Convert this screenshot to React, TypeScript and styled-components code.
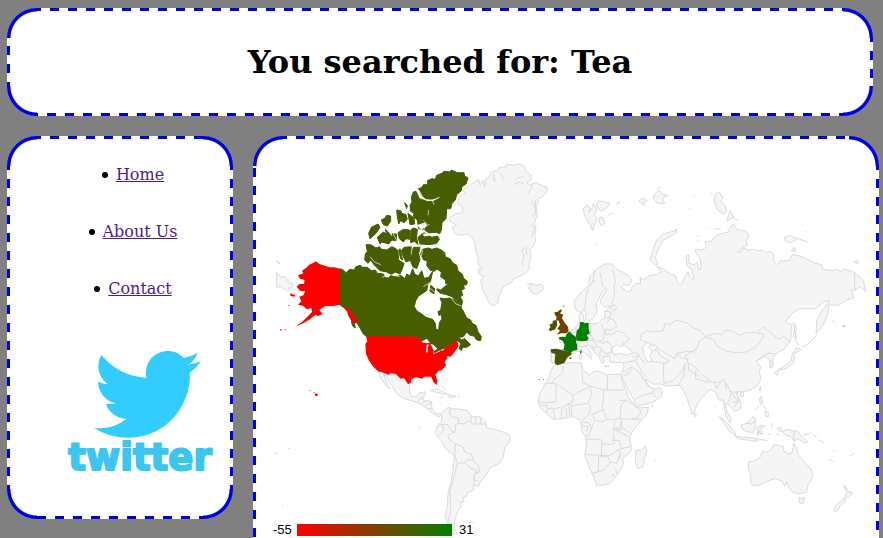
import React from "react";
import styled, { createGlobalStyle, css } from "styled-components";

const GlobalStyle = createGlobalStyle`
  html { background: #808080; scrollbar-width: none; }
  body { margin: 0; font-family: "DejaVu Serif", serif; font-size: 16px; color: #000; }
`;

const blue = "#0000e6";
const dashes = `transparent 0 7px, ${blue} 7px 16px, transparent 16px 18px`;
const corner = (at: string) =>
  `radial-gradient(circle 30px at ${at}, transparent 26px, ${blue} 27px, ${blue} 30px, transparent 31px)`;

/* Dashed frame with solid rounded corners. */
const dashedFrame = css`
  box-sizing: border-box;
  border-radius: 30px;
  background:
    ${corner("100% 100%")} left top / 30px 30px no-repeat,
    ${corner("0 100%")} right top / 30px 30px no-repeat,
    ${corner("0 0")} right bottom / 30px 30px no-repeat,
    ${corner("100% 0")} left bottom / 30px 30px no-repeat,
    repeating-linear-gradient(to right, ${dashes}) left top / 100% 3px no-repeat,
    repeating-linear-gradient(to bottom, ${dashes}) right top / 3px 100% no-repeat,
    repeating-linear-gradient(to left, ${dashes}) left bottom / 100% 3px no-repeat,
    repeating-linear-gradient(to top, ${dashes}) left top / 3px 100% no-repeat,
    #fff;
`;

const Page = styled.div`
  padding: 8px 4px 20px 7px;
`;

const Header = styled.header`
  ${dashedFrame}
  margin: 0 6px 20px 0;
  padding: 35px 10px;
  text-align: center;
`;

const Title = styled.h1`
  margin: 0;
  font-size: 32px;
  line-height: 38px;
`;

const Columns = styled.div`
  display: flex;
  align-items: flex-start;
  gap: 20px;
`;

const Sidebar = styled.aside`
  ${dashedFrame}
  flex: none;
  width: 226px;
  padding: 29px 3px 37px;
`;

const NavList = styled.ul`
  display: flex;
  flex-direction: column;
  align-items: center;
  gap: 38px;
  margin: 0 0 53px;
  padding: 0 0 0 40px;
  list-style: none;
`;

const NavItem = styled.li`
  display: flex;
  align-items: center;
  gap: 8px;
  padding-right: 14px;
  line-height: 19px;

  &::before {
    content: "";
    width: 6px;
    height: 6px;
    border-radius: 50%;
    background: #000;
  }
`;

const NavLink = styled.a`
  color: #551a8b;
`;

const LogoLink = styled.a`
  display: block;
  width: 156px;
  margin-left: 52px;
`;

const Drawing = styled.svg`
  display: block;
  width: 100%;
  height: auto;
`;

const Main = styled.main`
  ${dashedFrame}
  flex: 1;
  min-width: 0;
  padding: 14px 9px 30px 17px;
`;

const LegendLabel = styled.text`
  font: 13px "Liberation Sans", Arial, sans-serif;
  fill: #000;
`;

const Wordmark = styled.text`
  font: bold 37px "DejaVu Sans", sans-serif;
  fill: #3ac6f0;
  stroke: #3ac6f0;
  stroke-width: 2px;
  stroke-linejoin: round;
`;

const Land = styled.g`
  fill: #f5f5f5;
  stroke: #dadada;
  stroke-width: 3px;
  stroke-linejoin: round;
`;

const Borders = styled.path`
  fill: none;
`;

function TwitterLogo() {
  return (
    <Drawing viewBox="62 350 156 131" role="img" aria-label="twitter">
      <g transform="translate(94 340) scale(4.45)" fill="#33ccff">
        <path d="M23.953 4.57a10 10 0 01-2.825.775 4.958 4.958 0 002.163-2.723c-.951.555-2.005.959-3.127 1.184a4.92 4.92 0 00-8.384 4.482C7.69 8.095 4.067 6.13 1.64 3.162a4.822 4.822 0 00-.666 2.475c0 1.71.87 3.213 2.188 4.096a4.904 4.904 0 01-2.228-.616v.06a4.923 4.923 0 003.946 4.827 4.996 4.996 0 01-2.212.085 4.936 4.936 0 004.604 3.417 9.867 9.867 0 01-6.102 2.105c-.39 0-.779-.023-1.17-.067a13.995 13.995 0 007.557 2.209c9.053 0 13.998-7.496 13.998-13.985 0-.21 0-.42-.015-.63A9.935 9.935 0 0024 4.59z" />
      </g>
      <Wordmark x="140" y="469" textAnchor="middle">twitter</Wordmark>
    </Drawing>
  );
}

function Greenland() {
  return (
    <Land transform="translate(1290 450)">
      <path d="M178 82L184 66 202 62 208 52 228 50 230 42 248 46 268 42 282 48 290 66 304 76 302 92 290 98 300 106 318 98 330 104 352 112 350 124 336 142 322 146 326 158 318 170 322 196 312 220 318 236 314 262 318 270 308 290 300 298 304 322 296 344 300 356 284 372 262 382 250 386 244 398 230 404 216 416 212 430 206 438 204 458 194 468 178 460 164 430 156 410 152 390 162 380 148 374 144 362 152 350 142 338 146 326 138 306 136 284 128 264 112 252 92 256 76 252 66 232 80 226 62 216 58 204 76 192 96 188 98 172 82 160 88 142 106 128 98 122 122 104 138 94 146 88 150 106 158 92 164 110 166 88Z" />
      <Borders d="M252 104L268 96 282 102M280 80L262 84 256 90M304 152L316 176M306 196L314 200M304 224L314 236 304 262M276 348L282 316 274 300 288 292 290 314M148 366L160 352M294 130L306 112 306 98M184 82L196 96 190 72M210 70L222 90M316 152L316 196" />
      <path d="M292 404L306 402 302 410 294 414 304 418 302 426 318 434 338 420 342 412 334 402 320 406 308 400Z" />
      <path d="M460 174L474 166 480 176 476 188 488 172 490 160 500 180 494 194 502 204 494 222 488 242 480 224 470 208 462 192ZM500 160L508 152 524 156 540 160 530 174 514 184 504 176ZM508 202L518 202 524 220 514 228 508 216Z" />
      <Borders d="M560 162L570 156M540 194L550 190M528 244L532 245M500 282L502 288M366 340L368 341M534 196L538 194" />
    </Land>
  );
}

function Eurasia() {
  return (
    <Land transform="translate(1800 510)">
      <path d="M-76 390L-78 400-72 420-56 430-48 416-42 428-44 446-32 454-20 444-8 424-12 400-4 386 6 366 16 352 20 358 8 378 0 396 14 412 44 404 30 412 14 424 14 446 6 448 -6 460 -30 462-46 458-52 430-62 432-62 456-76 476-92 492-122 508-120 516-106 520-106 538-148 538-146 578-132 584-106 576-92 556-74 546-58 542-44 550-26 566-24 562-30 546-42 530-36 526-18 544-2 562 6 580 14 576 8 560 28 560 30 576 70 578 72 590 66 610 68 628 86 662 102 690 110 710 160 696 184 680 188 662 178 652 168 658 150 652 134 628 142 630 160 642 182 642 200 648 240 646 252 664 262 688 276 732 282 730 292 700 318 670 330 658 346 666 356 690 370 690 378 740 390 758 394 746 382 728 376 700 386 704 404 724 420 718 424 700 412 676 412 664 430 666 450 660 472 648 484 626 478 610 482 590 468 572 480 568 494 560 508 566 510 592 518 590 520 562 530 550 555 535 572 510 574 480 576 465 556 456 576 430 600 416 646 416 670 396 690 392 668 420 650 450 648 490 670 465 684 430 686 404 716 406 740 390 762 384 754 362 764 360 780 352 797 364 790 330 764 308 730 296 722 306 710 296 704 302 668 298 664 284 640 278 612 262 582 254 576 256 568 272 540 272 530 284 522 276 520 250 510 244 496 248 486 240 470 242 460 238 444 240 430 234 424 246 412 246 424 236 442 226 438 214 446 202 440 184 412 178 400 162 388 176 386 186 360 192 344 200 334 212 316 216 318 232 306 240 286 238 288 250 300 264 304 296 296 298 292 276 284 284 268 280 266 254 258 258 262 288 276 300 282 330 270 322 264 306 254 320 246 344 232 340 226 318 212 312 192 298 170 288 184 304 170 314 150 316 130 330 120 322 122 340 108 340 96 350 94 362 80 364 64 352 70 344 88 346 96 330 84 316 70 308 48 296 36 282 14 282-10 298-30 320-34 346-56 366Z" />
      <path fill="#fff" d="M36 542L38 532 50 524 62 530 74 526 90 538 98 548 82 556 60 550 42 554ZM128 530L140 518 152 520 146 534 156 544 150 556 156 574 144 576 132 556Z" />
      <path d="M220 184L230 178 228 190 206 202 188 212 176 236 166 262 174 282 166 286 150 270 158 244 170 210 190 192ZM116 92L132 84 142 92 126 102ZM164 72L176 60 190 74 204 76 188 84 194 100 172 100 160 84ZM346 72L358 66 368 84 362 96 376 106 380 124 370 134 352 118 342 92ZM380 152L390 122 402 142ZM552 202L568 196 592 206 574 218 556 214ZM574 242L582 232 588 244ZM762 278L770 270 776 280Z" />
      <Borders d="M50 100L60 96M280 78L284 80M266 114L272 118M326 174L330 172M344 176L362 178M290 198L296 200M172 56L182 50M594 206L606 210 624 216M614 184L618 185M126 106L138 102M332 70L338 74M292 210L298 212M402 146L416 150M764 308L764 358M578 456L584 470 580 500 590 502 582 480M696 452L706 458M38 300L46 330 42 350 44 380 34 402M-30 346L-20 332-16 300M-46 414L-42 380-34 352-16 330M8 350L4 326 0 308M42 404L50 412 42 424 30 412M14 424L34 426 28 444 16 442M20 460L30 444 46 454 50 470 34 480 16 478M-30 462-28 490-22 508-4 514 10 510 14 486 4 462M16 478L18 494 38 492 54 482 74 490 88 508 66 524M124 494L140 482 160 486 190 482 194 462 214 462 228 450 264 460 276 472 302 482 316 500 344 490 366 494 376 480 400 484 416 496 440 488 470 488 490 470 504 484 522 496 536 508 550 500 572 516M124 494L122 510 140 518M316 500L342 510 352 528 376 542 404 548 440 546 466 530 480 518 494 494 470 488M316 500L296 516 292 534 256 558 264 578 290 594 304 612 334 636 362 636 372 626 380 660M152 524L166 526 196 550 224 566 230 550 262 544 286 546M156 544L170 536 180 556 208 574 194 580 154 574M230 550L244 564 266 568M190 606L192 640 220 632 246 604 256 580M192 576L190 606M256 580L252 616 236 646M288 600L286 626 328 638M264 578L266 600 300 620M344 636L350 656 360 640 368 628M384 700L394 670 378 638M388 664L410 668 416 690 404 710M396 668L412 694M398 696L418 696M474 570L490 556 506 550 526 552M-26 510L-16 516-8 530-22 534-18 544M-4 514L8 520 20 514 36 526 34 548 14 550 6 536-6 530M6 536L-2 552 6 560M14 550L28 556M20 514L26 520M100 548L116 552 122 566 136 580M98 560L116 560M108 574L126 606 140 620M70 580L90 574 108 572 116 552M74 606L94 590 120 610 148 652M72 616L86 612 96 590M104 688L128 676 158 668 170 684M158 668L164 656M-66 528L-50 530-34 524-16 530" />
    </Land>
  );
}

function Oceania() {
  return (
    <Land transform="translate(1950 960)">
      <path d="M296 426L312 424 330 412 338 394 352 396 362 390 372 374 386 376 402 380 400 392 416 402 426 398 432 370 440 384 444 404 456 418 468 432 484 448 488 466 482 482 474 494 470 516 448 522 428 516 418 506 410 484 404 500 396 484 376 476 350 484 332 494 310 498 302 490 302 466 294 442ZM446 532L456 536 464 532 460 550 450 550Z" />
      <path d="M580 496L590 504 594 514 608 518 596 532 588 534 586 524 590 516ZM584 532L586 544 572 556 560 574 550 572 560 552 574 544Z" />
      <path d="M208 290L222 300 240 320 254 334 258 348 240 336 224 314ZM256 348L280 352 310 354 328 358 322 364 290 360 262 356ZM274 314L290 310 308 290 318 298 314 310 318 320 308 338 288 334 274 324ZM322 324L334 316 346 318 332 324 338 344 330 340 328 330 324 346ZM398 334L412 328 428 332 444 334 452 346 474 366 460 368 444 356 432 364 424 350 404 344ZM382 324L392 322 398 336 386 332ZM328 238L334 228 338 250 332 254ZM344 274L354 276 356 290 346 288ZM332 200L330 214 328 204ZM270 218L282 214 280 228 272 230ZM134 280L140 288 134 290ZM376 158L384 150 404 138 422 124 428 98 434 104 430 130 412 144 386 150 382 166 374 160ZM430 96L440 84 454 88 438 100Z" />
      <Borders d="M432 332L432 364M460 344L478 342 484 334M330 358L352 362M366 310L364 322M380 342L388 344M490 346L500 352M506 360L524 368M548 390L556 398M536 416L550 426M600 408L614 400M12 422L16 422M434 10L438 24 436 60 446 76M456 82L474 72 500 46M312 272L328 258M290 310L304 312 316 304M354 344L362 340M194 256L196 262M4 258L10 259M548 600L550 602M358 142L368 140 362 120M338 256L350 270M470 346L462 344" />
    </Land>
  );
}

function Americas() {
  return (
    <>
      <Land transform="translate(810 990)">
        <path d="M324 124L334 126 356 134 378 132 392 146 402 146 414 162 420 164 418 186 424 200 440 200 448 188 468 186 462 200 454 206 464 212 484 214 486 236 500 252 512 250 508 262 488 250 470 234 446 220 424 212 396 204 380 190 366 166 350 144 340 132 346 150 360 176 352 172 334 148Z" />
        <path d="M480 182L498 176 520 186 532 194 512 190ZM534 194L558 198 548 204 534 200Z" />
        <Borders d="M444 216L450 204 460 206M454 220L466 214M466 228L484 216M472 236L488 236M512 202L520 202M562 200L570 200M504 162L510 170M516 168L526 180M446 288L450 296M12 370L22 371M54 355L60 356M36 524L40 525M106 166L108 167" />
      </Land>
      <Land transform="translate(1260 1140)">
        <path d="M66 98L84 82 96 88 100 86 140 90 154 108 184 112 198 128 200 144 240 152 268 164 272 180 254 204 250 232 236 252 212 262 200 282 182 304 176 318 160 316 162 330 142 338 138 350 128 352 132 364 120 368 124 380 112 396 104 420 104 446 112 462 96 460 82 430 76 410 82 380 84 340 94 300 102 250 102 226 80 210 62 180 46 160 50 140 64 124Z" />
        <Borders d="M92 82L88 96 94 110 114 114 116 130 106 134 106 156 94 154 84 134 66 132 50 142M66 132L72 150 58 166M106 156L84 166 88 180 106 192 104 224 112 250 100 300 90 330 92 390 86 420 100 450M106 192L128 200 134 216 154 222 160 240 176 258 178 276 164 280 162 316M112 250L134 248 140 240 160 240M134 248L150 264 170 272 164 282 160 300 178 304M154 108L152 126 160 132 198 132M166 112L168 130M182 114L182 130M116 130L134 132 142 122 152 126M144 428L160 428" />
      </Land>
    </>
  );
}

function Africa() {
  return (
    <Land transform="translate(1560 1110)">
      <path d="M100 -10L112 -18 150 -22 184 -22 186 -4 208 16 222 4 238 4 262 14 300 12 310 40 324 80 338 98 350 114 386 112 382 130 360 156 340 180 328 204 334 230 332 246 308 264 310 284 294 312 268 342 230 347 222 322 212 300 194 256 200 224 196 200 184 180 182 152 160 140 126 146 100 148 78 130 60 112 54 98 60 70 76 40 88 20 92 4ZM348 242L364 240 376 228 380 244 368 290 354 296 346 280Z" />
      <Borders d="M78 40L98 40 102 28 128 8 130 -12M98 40L108 42 108 96 80 98 56 96M108 42L160 76 210 48 188 36 186 4M210 48L252 60 262 60 262 14M262 60L312 60M252 60L250 90 246 116 256 122M160 76L158 96 138 104 126 112 124 144M210 48L216 72 204 100 160 106 142 104M204 100L212 108 208 132 188 150M212 134L248 120 262 150 300 146 304 104 318 90M218 136L224 152 250 154 262 148M186 156L206 158 214 176 222 156M186 168L204 170 200 186M214 176L206 198 196 198M284 152L280 190 284 220 274 224 246 222 242 208 200 208M246 222L244 256 196 254M300 146L334 148 364 148M304 152L306 172 330 190M280 178L306 178M304 146L302 172 286 174M284 178L326 200M274 210L300 212 302 236 332 230M244 256L266 258 298 238 302 256 296 270M236 256L234 306 214 310M238 262L262 258 272 276 290 280 298 256M234 306L252 300 272 276M270 322L278 314 282 320M286 300L292 304 290 310M62 106L80 106 84 116 78 128M84 116L100 114 104 146M100 118L120 112M138 112L140 140M146 110L150 138M154 108L156 138M318 92L340 104 364 124 352 144 334 148M404 272L408 270M414 270L416 272M394 106L400 108M300 92L318 90" />
    </Land>
  );
}

function NorthAmericaHighlights() {
  return (
    <g transform="translate(810 450)">
      <path fill="#f5f5f5" stroke="#dadada" strokeWidth="3" d="M20 368L34 382 46 380 54 394 70 404 62 416 50 424 34 410 20 412ZM20 334L30 338 26 342Z" />
      <g fill="#465d00" stroke="#465d00" strokeWidth="3">
        <path d="M210 356L220 360 228 368 240 358 252 360 258 350 270 346 278 352 292 352 304 362 316 360 322 370 340 372 344 380 334 382 356 384 362 376 375 380 392 376 405 386 410 372 420 378 428 356 434 372 445 378 455 362 462 385 476 382 488 364 482 396 474 402 470 422 458 430 446 438 437 452 433 470 440 482 458 494 468 502 488 508 496 520 498 538 506 540 508 518 516 506 512 480 516 458 510 444 524 446 540 444 556 450 566 464 578 480 590 504 602 510 606 520 618 526 624 545 634 560 632 572 620 570 612 558 600 556 590 546 580 560 566 562 574 570 584 566 592 574 602 584 590 592 578 592 574 602 568 596 572 580 560 570 545 582 520 596 492 608 492 592 472 572 460 575 440 560 290 560 280 552 268 530 256 512 244 495 232 480 210 465Z" />
        <path d="M452 312L458 298 474 294 486 298 500 294 514 300 524 308 526 320 540 326 548 338 560 346 564 362 578 374 580 384 592 394 590 404 580 406 584 416 574 420 578 436 570 440 578 454 572 476 560 450 545 440 530 434 512 430 500 420 510 405 528 404 526 390 512 380 514 366 502 358 494 364 480 360 470 346 472 334 458 328Z" />
        <path d="M288 284L302 284 318 294 328 290 335 298 350 300 366 290 378 296 384 304 386 330 402 340 398 354 390 372 375 366 364 374 350 366 330 362 312 344 302 330 294 340 284 330 286 312 292 304ZM394 302L402 292 424 290 422 310 424 330 408 336 400 320ZM430 292L450 292 446 310 450 330 440 356 428 350 422 334Z" />
        <path d="M446 116L456 112 460 104 474 104 472 92 486 86 496 88 500 76 516 70 522 64 540 66 544 60 562 68 582 68 584 78 594 84 588 102 576 110 574 122 560 134 556 150 546 160 542 176 530 176 528 206 516 218 514 240 510 250 496 248 478 250 464 240 472 222 462 210 450 208 444 212 430 200 432 190 422 184 420 166 426 156 424 142 430 126 438 124 448 146 460 150 490 154 508 142 486 148 468 146 454 136Z" />
        <path d="M444 262L462 248 486 262 502 258 508 268 500 280 480 284 450 282ZM380 180L392 182 396 190 408 194 412 208 402 218 392 212 386 222 382 200ZM414 190L432 204 434 222 420 224ZM404 158L412 166 410 176ZM334 210L346 204 350 196 362 198 362 214 352 228 340 224ZM296 250L304 232 324 222 330 232 318 250 300 266ZM322 262L340 246 350 252 346 238 356 248 368 264 366 252 380 252 378 272 366 270 356 282 336 276 330 282ZM384 248L400 238 418 240 420 268 408 266 400 276 388 266ZM422 240L430 234 442 238 440 262 444 284 434 274 422 278ZM442 210L460 212 468 222 460 238 446 236ZM386 300L390 296 398 330 392 326ZM482 406L494 416 492 432 480 424ZM504 484L512 482 514 494 506 496ZM244 514L252 516 256 534 248 528Z" />
      </g>
      <g fill="none" stroke="#fff" strokeWidth="2" strokeLinejoin="round">
        <path strokeWidth="3" d="M446 120L458 142 470 152 492 150 508 142" />
        <path d="M476 180L474 196M486 150L492 164M484 396L490 372 500 360 496 388 510 378M460 410L482 396M458 300L454 320 462 342 474 362M404 350L414 338 424 342M490 410L508 414 532 402M336 382L360 374 390 380M300 320L314 336 332 344M356 226L380 232M408 272L426 292M540 440L558 462 574 468M446 240L462 228 478 224M370 252L378 268M476 412L496 428" />
        <path fill="#fff" d="M492 394L502 372 508 398 528 404 512 418 496 410ZM460 252L500 250 502 254 462 258ZM442 226L466 218 470 228 454 238Z" />
      </g>
      <g fill="#ff0000">
        <path d="M210 356L192 352 178 352 160 346 148 342 138 334 128 340 118 344 108 354 96 362 100 370 84 376 90 386 104 390 102 402 88 402 80 410 90 422 106 424 100 436 88 440 94 454 84 464 100 468 110 478 124 474 126 486 112 500 96 516 76 530 100 520 122 506 136 494 144 498 158 492 148 480 166 468 190 468 210 464 220 472 232 486 234 496 246 516 256 520 262 516 254 496 244 492 240 474 228 474 210 464Z" />
        <path d="M60 430L76 436 74 440 62 438ZM54 464L60 466 56 468ZM30 537L36 539 34 542 30 541ZM40 540L54 536 44 541ZM117 720L124 722 120 724ZM130 725L136 729 130 728ZM134 730L144 732 142 738 136 738Z" />
        <path d="M288 558L292 574 286 582 288 612 296 630 308 648 324 664 334 666 356 674 362 670 378 672 392 686 402 684 414 702 422 700 424 688 438 682 458 686 462 680 484 680 490 696 500 706 502 692 496 674 506 662 516 660 528 646 524 636 532 624 530 618 542 620 554 606 566 588 560 568 545 582 520 596 490 612 492 592 472 572 460 575 440 560Z" />
      </g>
      <path fill="#fff" d="M454 576L470 566 480 578 468 580ZM470 586L476 582 472 608 468 606ZM482 582L490 584 502 596 492 604ZM492 612L512 600 510 604ZM512 600L524 596 518 602Z" />
    </g>
  );
}

function EuropeHighlights() {
  return (
    <g transform="translate(1560 870)">
      <path fill="#f5f5f5" stroke="#dadada" strokeWidth="3" d="M94 188L104 190 104 216 94 218ZM178 194L186 196 184 208 178 206ZM154 122L168 112 168 124 160 130ZM252 228L268 228 258 232Z" />
      <path fill="#704400" d="M104 66L112 66 122 58 126 62 120 70 130 74 126 84 134 98 144 110 146 122 140 130 124 130 110 134 120 122 112 116 120 104 116 92 108 90 110 80 104 74ZM130 46L134 48 130 51Z" />
      <path fill="#455600" d="M88 104L98 100 98 92 110 90 112 104 106 118 90 124 86 118 92 112ZM92 178L108 176 152 186 156 192 140 204 134 218 124 222 112 226 104 220 106 192 94 188ZM148 203L154 202 154 208 148 206Z" />
      <path fill="#047a00" d="M116 142L128 140 136 142 140 132 148 124 156 132 172 144 168 156 172 166 172 180 160 182 152 188 130 180 134 164 128 152 118 148ZM181 182L185 180 184 192 180 190Z" />
      <path fill="#008000" d="M180 96L190 96 192 100 206 98 206 118 210 130 200 136 206 144 202 152 186 154 172 152 168 138 170 122 178 114Z" />
      <path fill="#333" d="M56 267L60 268 58 271ZM68 267L72 269 70 271Z" />
      <path fill="#a33" d="M968 109L972 106 974 111Z" />
    </g>
  );
}

function ResultMap() {
  return (
    <Drawing viewBox="270 150 600 400" role="img" aria-label="Map of results by country">
      <defs>
        <linearGradient id="scale">
          <stop offset="0" stopColor="#ff0000" />
          <stop offset="1" stopColor="#008000" />
        </linearGradient>
      </defs>
      <g transform="scale(0.33333)">
        <Greenland />
        <Eurasia />
        <Africa />
        <Americas />
        <Oceania />
        <NorthAmericaHighlights />
        <EuropeHighlights />
      </g>
      <LegendLabel x="273" y="534">-55</LegendLabel>
      <rect x="297" y="524" width="155" height="12" fill="url(#scale)" />
      <LegendLabel x="459" y="534">31</LegendLabel>
    </Drawing>
  );
}

const links = ["Home", "About Us", "Contact"];

export default function App() {
  return (
    <>
      <GlobalStyle />
      <Page>
        <Header>
          <Title>You searched for: Tea</Title>
        </Header>
        <Columns>
          <Sidebar>
            <nav>
              <NavList>
                {links.map((label) => (
                  <NavItem key={label}>
                    <NavLink href="#">{label}</NavLink>
                  </NavItem>
                ))}
              </NavList>
            </nav>
            <LogoLink href="#">
              <TwitterLogo />
            </LogoLink>
          </Sidebar>
          <Main>
            <ResultMap />
          </Main>
        </Columns>
      </Page>
    </>
  );
}
